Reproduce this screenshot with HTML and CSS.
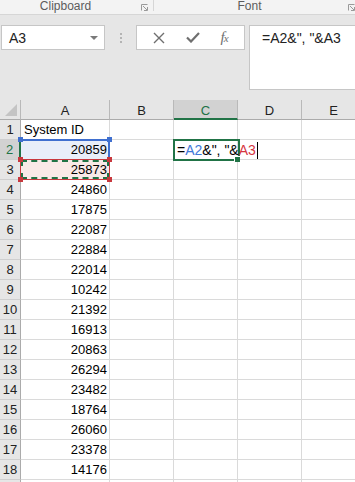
FILE: index.html
```html
<!DOCTYPE html>
<html lang="en">
<head>
    <meta charset="UTF-8">
    <title>Book1 - Excel</title>
    <link rel="stylesheet" href="styles.css">
</head>
<body>
    <!-- Ribbon group captions -->
    <div class="groups">
        <div class="group group-clipboard">
            <span>Clipboard</span>
            <svg class="launcher" width="7" height="7" viewBox="0 0 7 7"><path d="M0.5 6.5V0.5H6.5M6.5 3V6.5H3M2 2L6 6" fill="none" stroke="#9a9a9a" stroke-width="1"/></svg>
        </div>
        <div class="group group-font">
            <span>Font</span>
            <svg class="launcher" width="7" height="7" viewBox="0 0 7 7"><path d="M0.5 6.5V0.5H6.5M6.5 3V6.5H3M2 2L6 6" fill="none" stroke="#9a9a9a" stroke-width="1"/></svg>
        </div>
    </div>

    <!-- Formula bar -->
    <div class="formula-bar">
        <div class="name-box">
            <span>A3</span>
            <span class="caret"></span>
        </div>
        <div class="grip">
            <span></span><span></span><span></span>
        </div>
        <div class="fx-buttons">
            <svg width="12" height="12" viewBox="0 0 12 12"><path d="M1 1L11 11M11 1L1 11" stroke="#6f6f6f" stroke-width="1.4" fill="none"/></svg>
            <svg width="14" height="11" viewBox="0 0 14 11"><path d="M1 5.5L5 9.5L13 1" stroke="#6f6f6f" stroke-width="2.2" fill="none"/></svg>
            <span class="fx">f<i>x</i></span>
        </div>
        <div class="formula-box">=A2&amp;", "&amp;A3</div>
    </div>

    <!-- Worksheet -->
    <div class="sheet">
        <div class="corner"><span class="tri"></span></div>
        <div class="col-head">A</div>
        <div class="col-head">B</div>
        <div class="col-head active">C</div>
        <div class="col-head">D</div>
        <div class="col-head">E</div>

        <div class="row-head">1</div><div class="cell">System ID</div><div class="cell"></div><div class="cell"></div><div class="cell"></div><div class="cell"></div>
        <div class="row-head active">2</div>
        <div class="cell num ref-a2">20859
            <span class="dot blue tl"></span><span class="dot blue tr"></span>
        </div>
        <div class="cell"></div>
        <div class="cell editing">
            <span class="edit-text">=<b class="r1">A2</b>&amp;", "&amp;<b class="r2">A3</b><span class="cursor"></span></span>
            <span class="handle"></span>
        </div>
        <div class="cell"></div><div class="cell"></div>
        <div class="row-head">3</div>
        <div class="cell num ref-a3">25873
            <span class="marquee"></span>
            <span class="dot red tl"></span><span class="dot red tr"></span>
            <span class="dot red bl"></span><span class="dot red br"></span>
        </div>
        <div class="cell"></div><div class="cell"></div><div class="cell"></div><div class="cell"></div>
        <div class="row-head">4</div><div class="cell num">24860</div><div class="cell"></div><div class="cell"></div><div class="cell"></div><div class="cell"></div>
        <div class="row-head">5</div><div class="cell num">17875</div><div class="cell"></div><div class="cell"></div><div class="cell"></div><div class="cell"></div>
        <div class="row-head">6</div><div class="cell num">22087</div><div class="cell"></div><div class="cell"></div><div class="cell"></div><div class="cell"></div>
        <div class="row-head">7</div><div class="cell num">22884</div><div class="cell"></div><div class="cell"></div><div class="cell"></div><div class="cell"></div>
        <div class="row-head">8</div><div class="cell num">22014</div><div class="cell"></div><div class="cell"></div><div class="cell"></div><div class="cell"></div>
        <div class="row-head">9</div><div class="cell num">10242</div><div class="cell"></div><div class="cell"></div><div class="cell"></div><div class="cell"></div>
        <div class="row-head">10</div><div class="cell num">21392</div><div class="cell"></div><div class="cell"></div><div class="cell"></div><div class="cell"></div>
        <div class="row-head">11</div><div class="cell num">16913</div><div class="cell"></div><div class="cell"></div><div class="cell"></div><div class="cell"></div>
        <div class="row-head">12</div><div class="cell num">20863</div><div class="cell"></div><div class="cell"></div><div class="cell"></div><div class="cell"></div>
        <div class="row-head">13</div><div class="cell num">26294</div><div class="cell"></div><div class="cell"></div><div class="cell"></div><div class="cell"></div>
        <div class="row-head">14</div><div class="cell num">23482</div><div class="cell"></div><div class="cell"></div><div class="cell"></div><div class="cell"></div>
        <div class="row-head">15</div><div class="cell num">18764</div><div class="cell"></div><div class="cell"></div><div class="cell"></div><div class="cell"></div>
        <div class="row-head">16</div><div class="cell num">26060</div><div class="cell"></div><div class="cell"></div><div class="cell"></div><div class="cell"></div>
        <div class="row-head">17</div><div class="cell num">23378</div><div class="cell"></div><div class="cell"></div><div class="cell"></div><div class="cell"></div>
        <div class="row-head">18</div><div class="cell num">14176</div><div class="cell"></div><div class="cell"></div><div class="cell"></div><div class="cell"></div>
        <div class="row-head"></div><div class="cell"></div><div class="cell"></div><div class="cell"></div><div class="cell"></div><div class="cell"></div>
    </div>
</body>
</html>
```

FILE: styles.css
```css
body {
    margin: 0;
    width: 355px;
    height: 482px;
    overflow: hidden;
    background: #ffffff;
    font-family: 'Liberation Sans', Arial, sans-serif;
}

/* Ribbon captions */
.groups {
    display: flex;
    height: 14px;
    overflow: hidden;
    background: #f3f3f3;
    border-bottom: 1px solid #d6d6d6;
    font-size: 12px;
    line-height: 12px;
    color: #5c5c5c;
}

.group {
    position: relative;
    display: flex;
    justify-content: center;
    flex-shrink: 0;
}

.group-clipboard {
    width: 154px;
    border-right: 1px solid #d6d6d6;
    height: 11px;
    padding-right: 22px;
    box-sizing: border-box;
}

.group-font {
    width: 201px;
    padding-right: 10px;
    box-sizing: border-box;
}

.launcher {
    position: absolute;
    top: 4px;
}

.group-clipboard .launcher {
    right: 5px;
}

.group-font .launcher {
    right: 0;
}

/* Formula bar */
.formula-bar {
    display: flex;
    align-items: flex-start;
    height: 85px;
    overflow: hidden;
    padding-top: 10px;
    box-sizing: border-box;
    background: #e6e6e6;
}

.name-box {
    display: flex;
    align-items: center;
    justify-content: space-between;
    width: 104px;
    height: 25px;
    margin-left: 1px;
    padding: 0 6px 0 7px;
    box-sizing: border-box;
    background: #ffffff;
    border: 1px solid #c6c6c6;
    font-size: 14px;
    color: #222;
    flex-shrink: 0;
}

.caret {
    width: 0;
    height: 0;
    border-left: 4px solid transparent;
    border-right: 4px solid transparent;
    border-top: 4px solid #7a7a7a;
}

.grip {
    display: flex;
    flex-direction: column;
    align-items: center;
    gap: 2px;
    width: 31px;
    padding-top: 8px;
    flex-shrink: 0;
}

.grip span {
    width: 2px;
    height: 2px;
    background: #b4b4b4;
}

.fx-buttons {
    display: flex;
    align-items: center;
    justify-content: space-around;
    width: 109px;
    height: 25px;
    padding: 0 6px;
    box-sizing: border-box;
    background: #ffffff;
    border: 1px solid #c6c6c6;
    flex-shrink: 0;
}

.fx {
    font-family: 'Liberation Serif', serif;
    font-style: italic;
    font-size: 15px;
    color: #6f6f6f;
    letter-spacing: -1px;
}

.fx i {
    font-size: 11px;
}

.formula-box {
    flex: 1;
    height: 65px;
    margin-left: 4px;
    padding: 4px 0 0 12px;
    box-sizing: border-box;
    background: #ffffff;
    border: 1px solid #c6c6c6;
    border-right: none;
    font-size: 14px;
    color: #222;
    white-space: nowrap;
}

/* Sheet grid */
.sheet {
    display: grid;
    grid-template-columns: 21px 89px 64px 64px 64px 64px;
    grid-auto-rows: 20px;
    width: 355px;
    overflow: hidden;
    font-size: 13px;
    line-height: 20px;
    color: #000;
}

.corner,
.col-head {
    background: #e6e6e6;
    border-right: 1px solid #b9b9b9;
    border-bottom: 1px solid #ababab;
    box-sizing: border-box;
}

.corner {
    position: relative;
}

.tri {
    position: absolute;
    right: 3px;
    bottom: 3px;
    width: 0;
    height: 0;
    border-left: 12px solid transparent;
    border-bottom: 12px solid #c4c4c4;
}

.col-head {
    text-align: center;
    color: #222;
    padding-top: 1px;
}

.col-head.active {
    background: #d2d2d2;
    color: #217346;
    border-bottom: 2px solid #217346;
}

.row-head {
    background: #e6e6e6;
    border-right: 1px solid #ababab;
    border-bottom: 1px solid #cfcfcf;
    box-sizing: border-box;
    text-align: center;
    color: #222;
}

.row-head.active {
    background: #d2d2d2;
    color: #217346;
    border-right: 2px solid #217346;
}

.cell {
    position: relative;
    border-right: 1px solid #dadada;
    border-bottom: 1px solid #dadada;
    box-sizing: border-box;
    padding: 0 2px 0 3px;
    white-space: nowrap;
}

.cell.num {
    text-align: right;
}

/* Formula references */
.ref-a2 {
    background: #e8eef9;
}

.ref-a2::before {
    content: "";
    position: absolute;
    top: -1px;
    left: 0;
    right: -1px;
    bottom: 0;
    border-top: 2px solid #3f6fcf;
    border-right: 2px solid #3f6fcf;
}

.ref-a3 {
    background: #f9e9e7;
}

.ref-a3::before {
    content: "";
    position: absolute;
    top: -1px;
    left: -1px;
    right: -1px;
    bottom: -1px;
    border: 1px solid #c8383d;
}

.marquee {
    position: absolute;
    top: 0;
    left: 0;
    right: 0;
    bottom: 0;
    border: 2px dashed #217346;
}

.dot {
    position: absolute;
    width: 5px;
    height: 5px;
    z-index: 2;
}

.dot.blue { background: #3f6fcf; }
.dot.red { background: #c8383d; }
.dot.tl { left: -3px; top: -3px; }
.dot.tr { right: -3px; top: -3px; }
.dot.bl { left: -3px; bottom: -3px; }
.dot.br { right: -3px; bottom: -3px; }

/* Cell in edit mode */
.editing {
    z-index: 3;
}

.editing::before {
    content: "";
    position: absolute;
    top: -1px;
    left: -1px;
    width: 67px;
    height: 22px;
    box-sizing: border-box;
    border: 2px solid #217346;
}

.edit-text {
    position: relative;
    font-size: 14px;
}

.edit-text b {
    font-weight: normal;
}

.r1 { color: #3f78d8; }
.r2 { color: #d6363f; }

.cursor {
    display: inline-block;
    width: 1px;
    height: 17px;
    margin-left: 1px;
    background: #000;
    vertical-align: -4px;
}

.handle {
    position: absolute;
    right: -3px;
    bottom: -3px;
    width: 5px;
    height: 5px;
    background: #217346;
    border: 1px solid #ffffff;
    border-right: none;
    border-bottom: none;
}
```
